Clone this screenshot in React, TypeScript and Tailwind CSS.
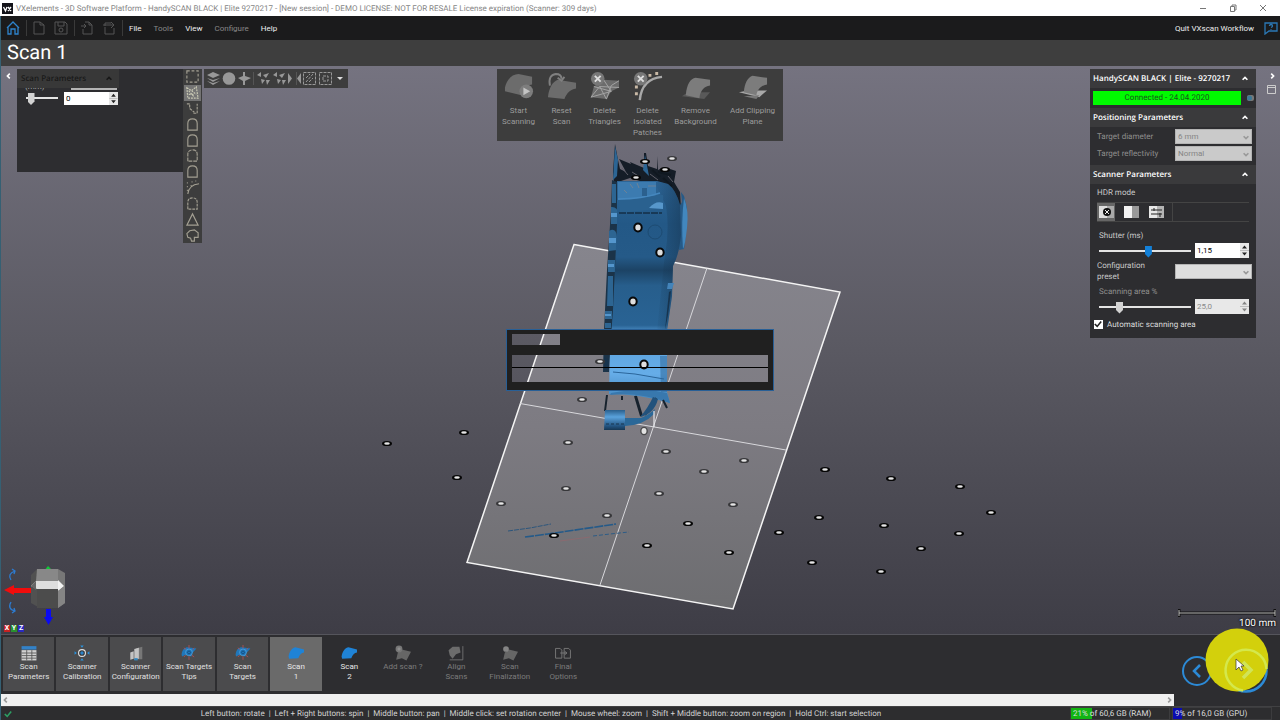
import React from "react";

const PATCH = "M1 16C3 7 9 2 15 2L29 5V13C22 14 19 18 18 24L1 20Z";

const markers: [number, number, number][] = [
  [387, 443, 1], [464, 432, 1], [457, 477, 1], [582, 399, 0], [600, 361, 0], [568, 442, 0],
  [566, 488, 0], [501, 503, 0], [607, 515, 0], [554, 535, 1], [666, 451, 0], [704, 471, 0],
  [744, 460, 0], [659, 493, 0], [733, 504, 0], [688, 523, 1], [647, 545, 1], [729, 552, 1],
  [779, 532, 1], [825, 469, 1], [891, 478, 1], [960, 486, 1], [991, 512, 1], [819, 517, 1],
  [884, 525, 1], [959, 533, 1], [921, 548, 1], [812, 562, 1], [881, 571, 1], [672, 158, 0],
  [645, 161, 1], [665, 169, 1], [636, 177, 1],
];

function Scene() {
  return (
    <svg
      className="absolute inset-0 w-full h-full"
      viewBox="0 66 1280 568"
      preserveAspectRatio="xMidYMid slice"
      aria-hidden="true"
    >
      <defs>
        <linearGradient id="plane" x1="0" y1="0" x2="0" y2="1">
          <stop offset="0" stopColor="#86858d" />
          <stop offset="0.5" stopColor="#7d7b82" />
          <stop offset="1" stopColor="#6d6d70" />
        </linearGradient>
        <linearGradient id="body" x1="0" y1="180" x2="0" y2="400" gradientUnits="userSpaceOnUse">
          <stop offset="0" stopColor="#2d6596" />
          <stop offset="0.2" stopColor="#235886" />
          <stop offset="0.35" stopColor="#255a88" />
          <stop offset="0.41" stopColor="#1c4365" />
          <stop offset="0.48" stopColor="#275e8c" />
          <stop offset="0.66" stopColor="#296394" />
          <stop offset="0.7" stopColor="#5aa0da" />
          <stop offset="0.88" stopColor="#66ade8" />
          <stop offset="1" stopColor="#4386bd" />
        </linearGradient>
        <linearGradient id="edge" x1="0" y1="0" x2="1" y2="0">
          <stop offset="0" stopColor="#16344f" stopOpacity="0" />
          <stop offset="1" stopColor="#16344f" stopOpacity="0.5" />
        </linearGradient>
        <linearGradient id="tube" x1="0" y1="0" x2="0" y2="1">
          <stop offset="0" stopColor="#2a5f8c" />
          <stop offset="0.35" stopColor="#5aa2dc" />
          <stop offset="0.8" stopColor="#235481" />
          <stop offset="1" stopColor="#173753" />
        </linearGradient>
      </defs>

      <path d="M574 244.500L840 292L733 609L467 562.500Z" fill="url(#plane)" stroke="#f4f4f4" strokeWidth="1.5" />
      <path d="M707 268L600 585M520 403.500L786 450" stroke="#d8d8dc" strokeWidth="1" />

      {/* loose laser strokes left on the table */}
      <path d="M508 531L530 528L551 524" stroke="#2d567c" strokeWidth="1" strokeDasharray="5 1" fill="none" />
      <path d="M525 537L548 534L616 524" stroke="#245a89" strokeWidth="1.6" strokeDasharray="9 1" fill="none" />
      <path d="M593 536L610 534L629 532" stroke="#2d5c86" strokeWidth="1" strokeDasharray="4 2" fill="none" />
      <path d="M560 541L590 537" stroke="#8a6a70" strokeWidth="1" />

      {/* ragged top */}
      <path
        d="M614 184L613 172L615 144L618 160L620 169L626 172L619 159L631 164L630 162L644 168L644 153L646 153L648 166L657 169V156L658 170L664 167L676 171L674 182L680 192L681 209L676 214L668 198L655 182L640 181L630 178L618 182Z"
        fill="#151d27"
      />
      <path d="M615 146L618 160L617 176L613 180ZM645 155L649 176L643 170Z" fill="#2c6594" />
      <path d="M652 170L660 177M658 172L671 175M663 178L672 186" stroke="#101820" strokeWidth="2" />
      <path d="M632 172L640 177M650 174L658 180M668 176L673 182M622 168L628 175" stroke="#5f5f69" strokeWidth="1" />
      <path d="M677 210L682 202L681 192L684 196L687 208L686 232L684 249L679 250Z" fill="#265a87" />
      <path d="M684 198Q689 210 687 228T683 249Q681 222 684 198Z" fill="#4287be" />

      {/* left rail with its lobes */}
      <path d="M612 180L617 182V205L618 240L616 310L612 330L610 356L609 372L603 372L604 330L607 270L611 210Z" fill="#1b3348" />
      <path
        d="M612 184h4v19h-4ZM611 207q6-1 8 7v10h-8ZM609 231q7-4 8 6v13l-8 1ZM608 260h7v12h-7ZM608 276h5v30h-6ZM605 311h7v8h-7ZM605 323h6v5h-6Z"
        fill="#2d6592"
      />
      <path d="M611 213h7v4h-7ZM609 238h7v5h-7ZM608 264h6v3h-6ZM605 314h6v2h-6Z" fill="#5496cd" />
      <path d="M604 357L609 360V368L605 370Z" fill="#17334c" />

      <path
        d="M617 181L657 181L668 184Q676 190 680 205L681 235Q679 255 673 266L672 296L667 331L667 392L670 403Q640 394 609 394L610 350L613 310L617 225Z"
        fill="url(#body)"
      />
      <path d="M654 181L668 184Q676 190 680 205L681 235Q679 255 673 266L672 296L667 331L657 331L664 262Q670 230 666 206Z" fill="url(#edge)" />
      <path d="M660 356H667V392L661 392Z" fill="#2b6496" opacity="0.5" />
      <path d="M618 182H656V196L640 199L618 200Z" fill="#3c7bb0" />
      <path d="M619 200Q638 199 657 195L663 195V208L648 210L620 213Z" fill="#2a618f" />
      <path d="M649 208Q656 200 663 203V209Z" fill="#5797cb" />
      <path d="M618 199Q642 199 660 193" stroke="#4587be" strokeWidth="1.4" fill="none" />
      <path d="M619 213L662 213" stroke="#142f47" strokeWidth="1.6" strokeDasharray="7 1" />
      <path d="M642 188h5v8h-5Z" fill="#2b608e" />
      <path d="M630 184l3 4M637 183l2 5M648 186h8M624 190l3 3" stroke="#6d8296" strokeWidth="1" />
      <circle cx="655" cy="232" r="7" fill="none" stroke="#1d4b72" />
      <path d="M668 283h6l-2 6h-5Z" fill="#4384ba" />
      <path d="M669 292L671 291L668 315L665 330Z" fill="#17344e" />
      <path d="M613 372L635 374L664 379" stroke="#2a659a" fill="none" />
      <path d="M611 393Q642 387 667 393L670 403Q640 392 610 395Z" fill="#3878ae" />

      {/* foot */}
      <path d="M607 395L605 411M622 396v4M635 396L641 416M636 396L642 416M663 400l4 8M656 398l-11 17" stroke="#17222d" strokeWidth="2" />
      <path d="M653 397L658 399Q654 414 640 417Q648 408 653 397Z" fill="#22527c" />
      <path d="M625 418L641 418Q650 414 655 409L654 414Q644 425 625 426Z" fill="#2b6898" />
      <path d="M605 410H625V430H604Z" fill="url(#tube)" />
      <path d="M606 424H624" stroke="#16354f" strokeDasharray="3 2" />
      <path d="M654 411V427" stroke="#e8e8ec" strokeWidth="1.2" />

      {markers.map(([x, y, dark]) => (
        <g key={`${x}-${y}`}>
          <ellipse cx={x} cy={y + 0.5} rx="5" ry="2.6" fill={dark ? "#060606" : "#37373a"} />
          <ellipse cx={x} cy={y + 0.5} rx="2.8" ry="1.3" fill="#e6e6e6" />
        </g>
      ))}
      {[[638, 227], [660, 252], [633, 301], [644, 364]].map(([x, y]) => (
        <ellipse key={y} cx={x} cy={y + 0.5} rx="3.7" ry="4" fill="#dedede" stroke="#080808" strokeWidth="2" />
      ))}
      <ellipse cx="644" cy="431" rx="3.2" ry="3.6" fill="#e2e2e2" stroke="#4a4a4c" strokeWidth="1.4" />
    </svg>
  );
}

function Chevron({ d = "M2 6L5 3L8 6", className = "" }: { d?: string; className?: string }) {
  return (
    <svg className={`w-2 h-2 shrink-0 ${className}`} viewBox="0 0 10 10" fill="none" stroke="currentColor" strokeWidth="2">
      <path d={d} />
    </svg>
  );
}

function PanelHeader({ children }: { children: React.ReactNode }) {
  return (
    <h2 className="flex items-center justify-between h-[19px] pl-[3px] pr-[7px] bg-[#3a3a3c] text-white font-['Open_Sans',sans-serif] font-semibold">
      {children}
      <button aria-label="Collapse" className="flex">
        <Chevron />
      </button>
    </h2>
  );
}

function Spin({ id, value, disabled, className }: { id: string; value: string; disabled?: boolean; className: string }) {
  return (
    <div className={`flex bg-white ${className}`}>
      <input
        id={id}
        defaultValue={value}
        disabled={disabled}
        className="min-w-0 flex-1 pl-[2px] text-black disabled:text-[#8a8a8a] disabled:bg-[#e8e8e8]"
      />
      <svg className="w-[9px] h-full bg-[#e6e6e6] text-[#222]" viewBox="0 0 9 14" fill="currentColor">
        <path d="M2 5L4.500 2L7 5ZM2 9L4.500 12L7 9Z" opacity={disabled ? 0.5 : 1} />
        <path d="M0 7H9" stroke="#aaa" strokeWidth="0.700" />
      </svg>
    </div>
  );
}

function Range({ label, value, active, disabled, className }: { label: string; value: number; active?: boolean; disabled?: boolean; className: string }) {
  return (
    <input
      type="range"
      aria-label={label}
      defaultValue={value}
      disabled={disabled}
      className={`appearance-none bg-transparent h-3 [&::-webkit-slider-runnable-track]:h-[2px] [&::-webkit-slider-runnable-track]:bg-[#e4e4e4] [&::-webkit-slider-thumb]:appearance-none [&::-webkit-slider-thumb]:w-[7px] [&::-webkit-slider-thumb]:h-3 [&::-webkit-slider-thumb]:-mt-1 [&::-webkit-slider-thumb]:[clip-path:polygon(0_0,100%_0,100%_70%,50%_100%,0_70%)] ${
        active ? "[&::-webkit-slider-thumb]:bg-[#1380d8]" : "[&::-webkit-slider-thumb]:bg-[#d2d2d2]"
      } ${className}`}
    />
  );
}

function Select({ id, value, disabled }: { id: string; value: string; disabled?: boolean }) {
  return (
    <div className="relative w-[77px] h-[15px]">
      <select
        id={id}
        disabled={disabled}
        className="appearance-none block w-full h-full pl-[2px] bg-[#dedede] border border-[#b4b4b4] text-[#333] disabled:bg-[#cacaca] disabled:text-[#858585] disabled:opacity-100"
      >
        <option>{value}</option>
      </select>
      <Chevron d="M2 4L5 7L8 4" className="absolute right-[2px] top-1 text-[#999] pointer-events-none" />
    </div>
  );
}

function LeftPanel() {
  return (
    <section className="w-[166px] h-[103px] bg-[#2d2d30]">
      <h2 className="relative z-10 flex items-center justify-between w-[102px] h-[19px] pl-1 pr-[6px] bg-[#383838] text-[#181818] font-['Open_Sans',sans-serif] font-semibold">
        Scan Parameters
        <Chevron />
      </h2>
      {/* the first row has scrolled half way under the title */}
      <div className="flex justify-between items-end w-[100px] h-[11px] pl-2 -mt-[7px]">
        <label htmlFor="resolution" className="text-[#aaa]">(mm)</label>
        <div className="w-[46px] h-[2px] mb-[2px] bg-[#b4b4b4]" />
      </div>
      <div className="flex gap-[6px] pl-[9px]">
        <Range label="Resolution" value={6} className="w-8" />
        <Spin id="resolution" value="0" className="w-[54px] h-[13px]" />
      </div>
    </section>
  );
}

const ARCH = "M3 14V7Q3 2 8 2T13 7V14Z";

const sideTools: { name: string; d: string; dash?: string; on?: boolean }[] = [
  { name: "Rectangle selection", d: "M2 2H14V14H2Z", dash: "3 2" },
  { name: "Free form selection", d: "M2 3L7 6L12 2L14 14H3ZM4 6L10 13M7 6L12 10M4 10H9", dash: "2 1", on: true },
  { name: "Polyline selection", d: "M2 3H5V8L10 12M9 13H13V3", dash: "3 1" },
  { name: "Brush selection", d: ARCH },
  { name: "Connected selection", d: ARCH },
  { name: "Grow selection", d: ARCH, dash: "4 1" },
  { name: "Invert selection", d: ARCH },
  { name: "Isolated selection", d: "M3 15Q4 5 15 4M2 7h1M2 3h1M7 2h1M6 6h1M11 1h1M2 11h1" },
  { name: "Boundary selection", d: ARCH, dash: "3 1" },
  { name: "Triangle selection", d: "M8 2L14 14H2Z" },
  { name: "Hole selection", d: "M5 3L10 2L14 5V10H10V14H7L6 11L3 10L2 6Z" },
];

function SideTools() {
  return (
    <div className="flex flex-col w-[19px] h-[174px] bg-[#3d3d3d]">
      {sideTools.map((t) => (
        <button key={t.name} aria-label={t.name} className={`flex-1 min-h-0 mx-[1px] flex items-center justify-center ${t.on ? "bg-[#747474]" : ""}`}>
          <svg className="w-[15px] h-[15px]" viewBox="0 0 16 16" fill="none" stroke={t.on ? "#c9c9b4" : "#a39f92"} strokeWidth="1.200" strokeDasharray={t.dash}>
            <path d={t.d} />
          </svg>
        </button>
      ))}
    </div>
  );
}

function ViewTools() {
  return (
    <div className="w-36 h-[19px] bg-[#3d3d3d]">
      <svg className="w-full h-full" viewBox="0 0 144 19" fill="#989898">
        <path d="M3 6L9 3L16 6L9 9ZM3 9L9 11L16 9L9 13ZM3 12L9 14L16 12L9 16Z" />
        <circle cx="25" cy="9.500" r="6.300" />
        <path d="M34 9L39 7V3H41V7L47 9L41 12V16H39V12Z" />
        <path d="M49.500 3V16M92.500 3V16" stroke="#555" />
        <path d="M53 6L57 3V8ZM59 6L65 4L62 9ZM57 10L61 11L58 15ZM62 11H66L63 16Z" />
        <path d="M69 6L73 3V8ZM75 6L81 4L78 9ZM73 10L77 11L74 15ZM78 11H82L79 16Z" />
        <path d="M84 4L88 9.500L84 15ZM97 4L93 9.500L97 15Z" />
        <path d="M99.500 3.500H111.500V15.500H99.500ZM102 13L109 5M102 9L106 5M105 13L109 9" fill="none" stroke="#989898" strokeDasharray="3 1" />
        <path d="M115.500 3.500H127.500V15.500H115.500ZM119 7H124V12H119Z" fill="none" stroke="#989898" strokeDasharray="3 1" />
        <path d="M133 8H139L136 11Z" fill="#ddd" />
      </svg>
    </div>
  );
}

function ScanToolbar() {
  const items = [
    {
      label: "Start Scanning", w: "w-[43px]",
      icon: <><path d={PATCH} /><circle cx="23" cy="20" r="7" fill="#7d7d7d" /><path d="M20 16L27 20L20 24Z" fill="#c4c4c4" /></>,
    },
    {
      label: "Reset Scan", w: "w-[43px]",
      icon: <><path d="M1 26C2 16 6 10 11 8L30 11V17C24 18 20 22 18 28Z" /><path d="M3 14Q1 3 9 2Q15 2 15 7M11 6L15 9L18 5" fill="none" stroke="#808080" strokeWidth="2" /></>,
    },
    {
      label: "Delete Triangles", w: "w-[43px]",
      icon: <><path d="M1 26L4 15L14 8L30 9V16L22 20L17 28Z" /><path d="M1 26L10 15L17 28L22 14L30 9M4 15L22 20L14 8M10 15L30 16M1 26L22 20" fill="none" stroke="#a5a5a5" /><circle cx="8" cy="7" r="7" fill="#777" /><path d="M5 4L11 10M11 4L5 10" stroke="#ddd" strokeWidth="2" /></>,
    },
    {
      label: "Delete Isolated Patches", w: "w-[43px]",
      icon: <><path d="M7 29Q9 7 30 5" fill="none" stroke="#a8a8a8" strokeWidth="2.500" /><path d="M2 14h3v3h-3ZM2 21h3v3h-3ZM16 2h3v3h-3ZM23 0h3v3h-3Z" fill="#c9b9a6" /><circle cx="8" cy="7" r="7" fill="#777" /><path d="M5 4L11 10M11 4L5 10" stroke="#ddd" strokeWidth="2" /></>,
    },
    {
      label: "Remove Background", w: "w-[53px]",
      icon: <><path d="M1 25L7 21H30L24 28Z" fill="#595959" /><path d="M5 24C6 12 10 7 15 6L30 8V14C24 15 20 19 19 27L5 24Z" fill="#7c7c7c" /></>,
    },
    {
      label: "Add Clipping Plane", w: "w-[61px]",
      icon: <><path d="M1 21L10 19H30L22 26Z" fill="#a8a8a8" /><path d="M6 21C7 11 10 6 15 4L30 6V13C23 14 20 19 19 24L6 21Z" fill="#7c7c7c" /><path d="M6 25L19 28L22 24" fill="#777" /></>,
    },
  ];
  return (
    <nav className="flex h-[72px] pt-[3px] bg-[#3d3d3d] text-[#9c9c9c]">
      {items.map((it) => (
        <button key={it.label} className={`flex flex-col items-center leading-[11px] ${it.w}`}>
          <svg className="w-[30px] h-[30px] mb-[3px] shrink-0" viewBox="0 0 31 31" fill="#6c6c6c">{it.icon}</svg>
          <span className="w-min">{it.label === "Add Clipping Plane" ? <><span className="whitespace-nowrap">Add Clipping</span> Plane</> : it.label}</span>
        </button>
      ))}
    </nav>
  );
}

function ScannerPanel() {
  return (
    <section className="w-[166px] h-[269px] bg-[#2d2d30] text-[#c8c8c8]">
      <PanelHeader>HandySCAN BLACK | Elite - 9270217</PanelHeader>
      <div className="flex items-center gap-[6px] pl-[3px] py-[3px]">
        <div className="w-[148px] h-[14px] leading-[14px] text-center bg-[#00fb00] text-[#17561a]">Connected - 24.04.2020</div>
        <svg className="w-2 h-2" viewBox="0 0 8 8"><rect x="0" y="1" width="7" height="6" rx="2" fill="#777" /><circle cx="2.500" cy="4" r="2.500" fill="#3c7896" /></svg>
      </div>
      <PanelHeader>Positioning Parameters</PanelHeader>
      <div className="flex flex-col gap-[2px] pl-[7px] pr-1 pt-[2px] pb-1 text-[#8d8d8d]">
        <div className="flex items-center justify-between">
          <label htmlFor="diameter">Target diameter</label>
          <Select id="diameter" value="6 mm" disabled />
        </div>
        <div className="flex items-center justify-between">
          <label htmlFor="reflectivity">Target reflectivity</label>
          <Select id="reflectivity" value="Normal" disabled />
        </div>
      </div>
      <PanelHeader>Scanner Parameters</PanelHeader>
      <div className="px-[7px] pt-[2px]">
        <div className="leading-[14px]">HDR mode</div>
        <div className="flex items-center gap-[7px] h-5 mt-[2px] border-y border-[#444]">
          <button aria-label="HDR off" className="flex items-center justify-center w-[18px] h-[18px] bg-[#666]">
            <svg className="w-[15px] h-3" viewBox="0 0 15 12"><path d="M0 0H15V12H0Z" fill="#ddd" /><path d="M8 0H15V12H8Z" fill="#aaa" /><circle cx="8" cy="6" r="4" fill="#111" /><path d="M6 4L10 8M10 4L6 8" stroke="#eee" /></svg>
          </button>
          <button aria-label="HDR auto" className="flex items-center justify-center w-[18px] h-[18px]">
            <svg className="w-[15px] h-3" viewBox="0 0 15 12"><path d="M0 0H15V12H0Z" fill="#999" /><path d="M0 0H8V12H0Z" fill="#f2f2f2" /></svg>
          </button>
          <button aria-label="HDR manual" className="flex items-center justify-center w-[18px] h-[18px]">
            <svg className="w-[15px] h-3" viewBox="0 0 15 12"><path d="M0 0H15V12H0Z" fill="#b4b4b4" /><path d="M0 0H8V12H0Z" fill="#e8e8e8" /><path d="M2 4H13M2 8H13M5 2V5M11 7V11" stroke="#222" /></svg>
          </button>
          <div className="w-px h-full bg-[#444]" />
        </div>
        <label htmlFor="shutter" className="block pl-[2px] mt-[7px] leading-[14px]">Shutter (ms)</label>
        <div className="flex items-center justify-between pl-[2px]">
          <Range label="Shutter" value={54} active className="w-[92px]" />
          <Spin id="shutter" value="1,15" className="w-[54px] h-[15px]" />
        </div>
      </div>
      <div className="flex items-center justify-between pl-[7px] pr-1 pt-[2px]">
        <label htmlFor="preset" className="w-14 leading-[11px]">Configuration preset</label>
        <Select id="preset" value="" />
      </div>
      <div className="px-[7px] pt-[3px]">
        <label htmlFor="area" className="block pl-[2px] leading-[14px] text-[#8d8d8d]">Scanning area %</label>
        <div className="flex items-center justify-between pl-[2px]">
          <Range label="Scanning area" value={20} disabled className="w-[92px]" />
          <Spin id="area" value="25,0" disabled className="w-[54px] h-[15px]" />
        </div>
      </div>
      <label className="flex items-center gap-1 pl-1 pt-[5px] text-[#dcdcdc]">
        <span className="relative flex">
          <input type="checkbox" defaultChecked className="appearance-none w-[9px] h-[9px] bg-white" />
          <Chevron d="M1 5L4 8L9 2" className="absolute left-0 top-0 text-[#222]" />
        </span>
        Automatic scanning area
      </label>
    </section>
  );
}

// only the frame and the gaps are painted, the empty fields stay see-through
function ProgressDialog() {
  return (
    <div role="dialog" aria-label="Progress" className="absolute left-1/2 top-[263px] -translate-x-1/2 flex flex-col w-[268px] h-[62px] border border-[#285f96]">
      <div className="h-1 bg-[#202020]" />
      <div className="flex h-[11px]">
        <div className="w-[5px] bg-[#202020]" />
        <div className="w-12" />
        <div className="flex-1 bg-[#202020]" />
      </div>
      <div className="h-[10px] bg-[#202020]" />
      <div className="h-[27px] border-x-5 border-[#202020] pt-3">
        <div className="h-px bg-black" />
      </div>
      <div className="flex-1 bg-[#202020]" />
    </div>
  );
}

function Gizmo() {
  return (
    <div className="absolute left-[3px] bottom-0">
      <svg className="w-[66px] h-[62px]" viewBox="0 0 66 62">
        <path d="M41 8L45 3L50 8Z" fill="#12c93a" />
        <path d="M28 12L34 6L35 44L28 40Z" fill="#515151" />
        <path d="M34 6H55V18H33Z" fill="#888" />
        <path d="M55 6L62 10V40L55 45Z" fill="#777" />
        <path d="M33 18H55V26H34L28 23Z" fill="#dedede" />
        <path d="M28 23L33 18V27Z" fill="#666" />
        <path d="M55 17L61 23L55 28Z" fill="#f2f2f2" />
        <path d="M34 26H55V45H34Z" fill="#4c4c4c" />
        <path d="M55 28L62 23V40L55 45Z" fill="#858585" />
        <path d="M1 27L11 22V25H28V30H11V32Z" fill="#f10c0c" />
        <path d="M43 46H48V54H50L45.500 62L41 54H43Z" fill="#0b0bf2" />
        <g fill="none" stroke="#2d7bd0" strokeWidth="1.300">
          <path d="M8 17Q4 11 12 8M9 6L12 8L11 11" />
          <path d="M8 39Q4 46 12 48M9 50L12 48L11 45" />
        </g>
      </svg>
      <div className="flex gap-px pl-px pb-[2px] text-[7px] leading-[7px] font-bold text-white text-center">
        <span className="w-[6px] bg-[#c52222]">X</span>
        <span className="w-[6px] bg-[#2a9130]">Y</span>
        <span className="w-[6px] bg-[#2a2ac0]">Z</span>
      </div>
    </div>
  );
}

const SMALL = "M1 17C2 8 7 4 12 4L27 6L20 14L18 20L8 17L2 20Z";

const targetIcon = (
  <>
    <path d={SMALL} fill="#2177ba" />
    <circle cx="14" cy="13" r="6" fill="none" stroke="#59b1ed" />
    <circle cx="14" cy="13" r="2.500" fill="none" stroke="#103a60" />
    <path d="M14 0V6M14 20V26M5 5l4 3M23 21l-4-3M23 5l-3 3M5 21l3-3" stroke="#b25054" strokeWidth="1.500" />
  </>
);

const scanIcon = <path d="M1 20C3 9 8 5 13 4L28 8V13Q21 14 18 23L2 24Z" fill="#1f83d6" />;

const steps = [
  { label: ["Scan", "Parameters"], kind: "done", icon: <><path d="M1 2H27V8H1Z" fill="#3382c8" /><path d="M1 9H27V27H1Z" fill="#d0d0d0" /><path d="M1 14H27M1 18.500H27M1 23H27M10 9V27M19 9V27" stroke="#555" strokeWidth="1.500" /></> },
  { label: ["Scanner", "Calibration"], kind: "done", icon: <><circle cx="14" cy="14" r="6" fill="#333" stroke="#e2e2e2" strokeWidth="2" /><circle cx="14" cy="14" r="3" fill="#2b84cb" /><path d="M11 1H17L14 5ZM11 27H17L14 23ZM1 11V17L5 14ZM27 11V17L23 14Z" fill="#2b94e0" /></> },
  { label: ["Scanner", "Configuration"], kind: "done", icon: <><path d="M14 6L25 3V25H14Z" fill="#777" /><path d="M4 13L10 11V24L4 26ZM11 7L19 5V24L11 26Z" fill="#c4c4c4" /><path d="M11 23h6v4h-6Z" fill="#3387c0" /></> },
  { label: ["Scan Targets", "Tips"], kind: "done", icon: targetIcon },
  { label: ["Scan", "Targets"], kind: "done", icon: targetIcon },
  { label: ["Scan", "1"], kind: "current", icon: scanIcon },
  { label: ["Scan", "2"], kind: "next", icon: scanIcon },
  { label: ["Add scan ?"], kind: "off", icon: <><path d="M2 26L5 13L12 8L28 12L20 27L12 23Z" fill="#666" /><circle cx="7" cy="7" r="6" fill="#777" /><path d="M7 4V10M4 7H10" stroke="#aaa" /></> },
  { label: ["Align", "Scans"], kind: "off", icon: <><path d="M1 9L8 3H20L22 13L14 16L8 24L3 18Z" fill="#6c6c6c" /><path d="M26 2V26H3" stroke="#777" strokeWidth="1.500" fill="none" /></> },
  { label: ["Scan", "Finalization"], kind: "off", icon: <><path d="M2 26L5 13L12 8L28 12L20 27L12 23Z" fill="#666" /><circle cx="7" cy="7" r="5" fill="#858585" /></> },
  { label: ["Final", "Options"], kind: "off", icon: <path d="M1 6H9L12 9V23H1ZM16 6H24L27 9V23H16ZM9 14H20M17 11L21 14L17 17" fill="none" stroke="#808080" strokeWidth="1.500" /> },
];

const stepStyle: Record<string, string> = {
  done: "bg-[#4b4b4d] text-[#e0e0e0]",
  current: "bg-[#6a6a6a] text-[#e8e8e8]",
  next: "text-[#e8e8e8]",
  off: "text-[#7c7c7c]",
};

function Meter({ percent, text, color }: { percent: number; text: string; color: string }) {
  return (
    <div className="relative w-[100px] h-[13px] leading-[11px] border border-[#3c3c3e] text-[#dcdcdc]">
      <div className={`absolute inset-y-0 left-0 ${color}`} style={{ width: `${percent}%` }} />
      <span className="relative pl-[2px] whitespace-nowrap">{text}</span>
    </div>
  );
}

function TopBars() {
  const icon = "w-[14px] h-[14px]";
  return (
    <>
      <header className="flex items-center h-4 pl-[2px] bg-white text-[#858585]">
        <svg className="w-[11px] h-[11px] mr-[3px] bg-[#14141a]" viewBox="0 0 11 11" fill="none" stroke="#fff" strokeWidth="1.300">
          <path d="M1.500 4L3.500 8L5 4M6 4L9 8M9 4L6 8" />
        </svg>
        <span className="flex-1 whitespace-nowrap">
          VXelements - 3D Software Platform - HandySCAN BLACK | Elite 9270217 - [New session] - DEMO LICENSE: NOT FOR RESALE License expiration (Scanner: 309 days)
        </span>
        <div className="flex gap-[22px] pr-[13px]">
          <button aria-label="Minimize"><svg className="w-2 h-2" viewBox="0 0 8 8" stroke="#777" fill="none"><path d="M1 4.500H7" /></svg></button>
          <button aria-label="Restore"><svg className="w-2 h-2" viewBox="0 0 8 8" stroke="#777" fill="none"><path d="M1.500 2.500H5.500V7.500H1.500ZM3 2V1H7V6H6" /></svg></button>
          <button aria-label="Close"><svg className="w-2 h-2" viewBox="0 0 8 8" stroke="#777" fill="none"><path d="M1 1L7 7M7 1L1 7" /></svg></button>
        </div>
      </header>
      <nav className="flex items-center h-6 pl-[5px] pr-[2px] bg-[#1b1b1c] border-l border-[#356073] text-[#eeeeee]">
        <button aria-label="Home"><svg className={icon} viewBox="0 0 14 14" fill="none" stroke="#2e84cd" strokeWidth="1.300"><path d="M1 7L7 1L13 7M2 6V13H5V8H9V13H12V6" /></svg></button>
        <div className="w-px h-4 ml-[6px] mr-[5px] bg-[#3a3a3a]" />
        <button aria-label="New"><svg className={icon} viewBox="0 0 14 14" fill="none" stroke="#555"><path d="M2 1H8L12 4V13H2ZM8 1V4H12" /></svg></button>
        <button aria-label="Save" className="ml-2"><svg className={icon} viewBox="0 0 14 14" fill="none" stroke="#555"><path d="M1 1H11L13 3V13H1ZM4 1V5H10V1" /><circle cx="7" cy="9" r="2" /></svg></button>
        <div className="w-px h-4 ml-[6px] mr-[5px] bg-[#3a3a3a]" />
        <button aria-label="Import"><svg className={icon} viewBox="0 0 14 14" fill="none" stroke="#555"><path d="M5 1H9L12 4V13H3V8M1 5H6M4 3L6 5L4 7M9 1V4H12" /></svg></button>
        <button aria-label="Export" className="ml-2"><svg className={icon} viewBox="0 0 14 14" fill="none" stroke="#555"><path d="M3 6V13H12V7M3 5V2H9M1 4H12M9 1L12 4L9 7" /></svg></button>
        <div className="w-px h-4 ml-[6px] mr-1 bg-[#3a3a3a]" />
        <div className="flex-1 flex gap-3 pl-[2px]">
          <button>File</button>
          <button className="text-[#888]">Tools</button>
          <button>View</button>
          <button className="text-[#888]">Configure</button>
          <button>Help</button>
        </div>
        <button className="mr-[10px]">Quit VXscan Workflow</button>
        <button aria-label="Help topics"><svg className={icon} viewBox="0 0 14 14" fill="none" stroke="#2b78b5" strokeWidth="1.300"><path d="M1 2H13V10H5L1 13ZM5.500 5Q5.500 3.500 7 3.500T8.500 5Q8.500 6 7 6.500M7 8V8.800" /></svg></button>
      </nav>
      <h1 className="h-[26px] pl-[6px] leading-[25px] bg-[#3e3e3e] border-l border-[#356073] text-[20px] text-white">Scan 1</h1>
    </>
  );
}

function App() {
  return (
    <div className="flex flex-col min-h-screen bg-[#2d2d30] font-[Roboto,'Open_Sans',sans-serif] [text-rendering:geometricPrecision] text-[8px] leading-[11px] overflow-x-hidden">
      <TopBars />
      <main className="relative flex-1 min-h-[400px] bg-linear-to-b from-[#757380] via-[#5a5962] to-[#3e3d46]">
        <Scene />
        <div className="absolute left-0 inset-y-0 w-px bg-[#356073]" />
        <div className="relative grid grid-cols-[1fr_auto_1fr] items-start pt-[3px]">
          <div className="flex items-start">
            <button aria-label="Hide left panel" className="w-[17px] pl-[5px] pt-[3px] text-white"><Chevron d="M6 2L3 5L6 8" /></button>
            <LeftPanel />
            <SideTools />
            <div className="w-[2px]" />
            <ViewTools />
          </div>
          <ScanToolbar />
          <div className="flex items-start justify-end">
            <ScannerPanel />
            <div className="flex flex-col items-center gap-[5px] w-6 pl-[7px] pt-[3px] text-white">
              <button aria-label="Hide right panel"><Chevron d="M4 2L7 5L4 8" /></button>
              <button aria-label="Float panel"><svg className="w-[9px] h-[9px]" viewBox="0 0 9 9" fill="none" stroke="#ccc"><path d="M0.500 0.500H8.500V8.500H0.500ZM0 2.500H9" /></svg></button>
            </div>
          </div>
        </div>
        <ProgressDialog />
        <Gizmo />
        <div className="absolute right-1 bottom-1 w-[98px] text-right text-[10px] leading-3 text-white [text-shadow:0_0_2px_#000,0_0_2px_#000]">
          <svg className="w-full h-2 mb-px" viewBox="0 0 98 8"><path d="M1 4H97M1 0V8M97 0V8" stroke="#111" strokeWidth="3" /><path d="M1 4H97M1 1V7M97 1V7" stroke="#bbb" /></svg>
          100 mm
        </div>
      </main>

      <footer className="border-l border-[#356073]">
        <div className="flex border-t border-[#55555c]">
          <div className="flex-1 min-w-0">
            <div className="grid grid-cols-11 gap-[2px] w-[586px] h-[59px] ml-[2px] pt-[2px] pb-[3px]">
              {steps.map((s) => (
                <button key={s.label.join(" ")} className={`flex flex-col items-center pt-[8px] leading-[10px] whitespace-nowrap ${stepStyle[s.kind]}`}>
                  <svg className="w-4 h-4 mb-px shrink-0" viewBox="0 0 28 28">{s.icon}</svg>
                  {s.label.map((l) => <span key={l}>{l}</span>)}
                </button>
              ))}
            </div>
            <div className="flex items-center justify-between h-3 px-[1px] bg-[#f0f0f0] text-[#999]">
              <Chevron d="M6 2L3 5L6 8" />
              <Chevron d="M4 2L7 5L4 8" />
            </div>
          </div>
          <div className="relative flex items-center gap-[12px] w-[106px] pl-2">
            <button aria-label="Previous step"><svg className="block w-[30px] h-[30px]" viewBox="0 0 30 30" fill="none" stroke="#2c8ad6" strokeWidth="2"><circle cx="15" cy="15" r="14" /><path d="M18 9L12 15L18 21" strokeWidth="2.500" /></svg></button>
            <button aria-label="Next step"><svg className="block w-11 h-11" viewBox="0 0 44 44" fill="none" stroke="#2c8ad6" strokeWidth="2.500"><circle cx="22" cy="22" r="20.500" /><path d="M19 14L27 22L19 30" strokeWidth="3.500" /></svg></button>
            <svg className="absolute left-[31px] -top-[7px] w-16 h-16 pointer-events-none" viewBox="0 0 64 64">
              <circle cx="32" cy="32" r="31.500" fill="#d3d00c" />
              <path d="M61.500 41A20.500 20.500 0 1 0 38 62.500" fill="none" stroke="#d4e84c" strokeWidth="2.500" />
              <path d="M38 34L46 42L38 50" fill="none" stroke="#d0e458" strokeWidth="3.500" />
              <path d="M31 31V42L34 39L36 43L38 42L36 38H39Z" fill="#fff" stroke="#333" strokeWidth="0.700" />
            </svg>
          </div>
        </div>
        <div className="flex items-center h-[14px] gap-[2px] pr-2 bg-[#2d2d2f] border-t border-[#414143] text-[#d2d2d2]">
          <Chevron d="M1 5L4 8L9 2" className="ml-[3px] text-[#2d9e63]" />
          <p className="flex-1 text-center whitespace-nowrap">
            Left button: rotate&nbsp; |&nbsp; Left + Right buttons: spin&nbsp; |&nbsp; Middle button: pan&nbsp; |&nbsp; Middle click: set rotation center&nbsp; |&nbsp; Mouse wheel: zoom&nbsp; |&nbsp; Shift + Middle button: zoom on region&nbsp; |&nbsp; Hold Ctrl: start selection
          </p>
          <Meter percent={21} text="21% of 60,6 GB (RAM)" color="bg-[#12b512]" />
          <Meter percent={9} text="9% of 16,0 GB (GPU)" color="bg-[#0b0bb0]" />
        </div>
      </footer>
    </div>
  );
}

export default App;
